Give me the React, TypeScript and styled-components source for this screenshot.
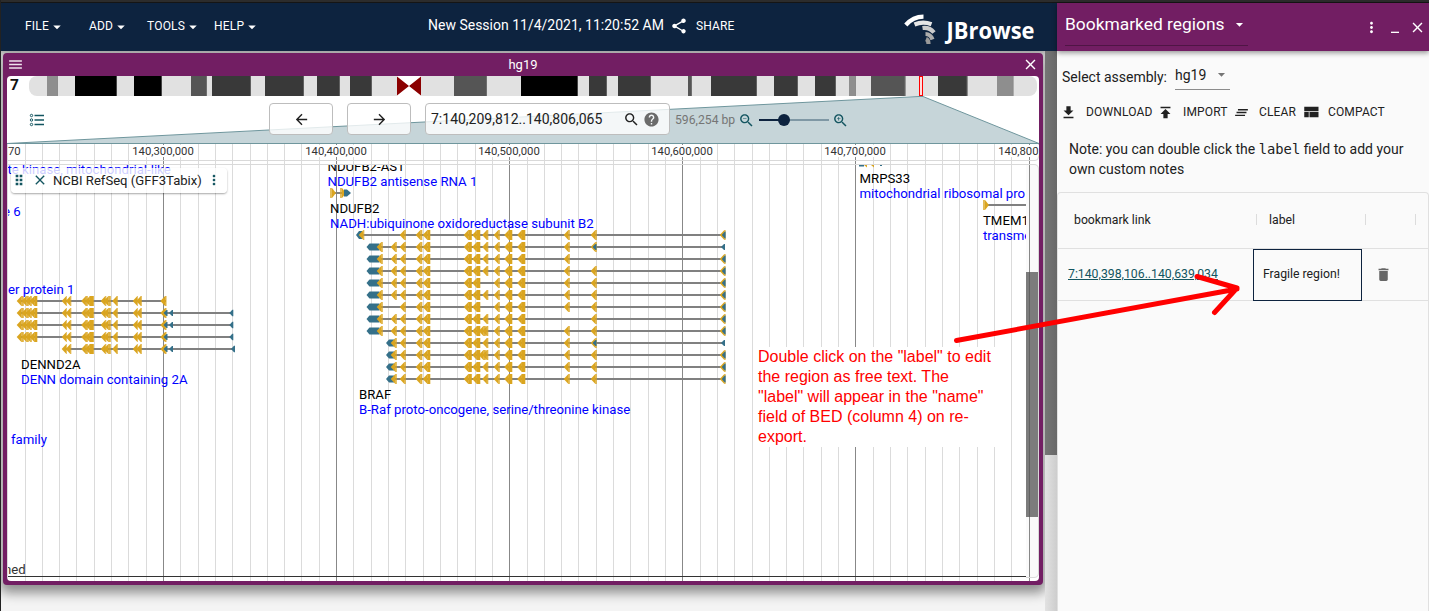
import React from 'react';
import styled, { createGlobalStyle } from 'styled-components';

const NAVY = '#0d233f';
const PURPLE = '#721e63';
const TEAL = '#135560';
const GOLD = '#daa520';
const UTR = '#357089';

const GlobalStyle = createGlobalStyle`
  * { box-sizing: border-box; }
  body { margin: 0; font-family: Roboto, 'Liberation Sans', sans-serif; color: #212121; }
`;

/* ---------- icons ---------- */
const paths = {
  drop: 'M7 10l5 5 5-5z',
  menu: 'M3 18h18v-2H3v2zm0-5h18v-2H3v2zm0-7v2h18V6H3z',
  close:
    'M19 6.41 17.59 5 12 10.59 6.41 5 5 6.41 10.59 12 5 17.59 6.41 19 12 13.41 17.59 19 19 17.59 13.41 12z',
  share:
    'M18 16.08c-.76 0-1.44.3-1.96.77L8.91 12.7c.05-.23.09-.46.09-.7s-.04-.47-.09-.7l7.05-4.11c.54.5 1.25.81 2.04.81 1.66 0 3-1.34 3-3s-1.34-3-3-3-3 1.34-3 3c0 .24.04.47.09.7L8.04 9.81C7.5 9.31 6.79 9 6 9c-1.66 0-3 1.34-3 3s1.34 3 3 3c.79 0 1.5-.31 2.04-.81l7.12 4.16c-.05.21-.08.43-.08.65 0 1.61 1.31 2.92 2.92 2.92 1.61 0 2.92-1.31 2.92-2.92s-1.31-2.92-2.92-2.92z',
  back: 'M20 11H7.83l5.59-5.59L12 4l-8 8 8 8 1.41-1.41L7.83 13H20v-2z',
  forward: 'M12 4l-1.41 1.41L16.17 11H4v2h12.17l-5.58 5.59L12 20l8-8z',
  search:
    'M15.5 14h-.79l-.28-.27C15.41 12.59 16 11.11 16 9.5 16 5.91 13.09 3 9.5 3S3 5.91 3 9.5 5.91 16 9.5 16c1.61 0 3.09-.59 4.23-1.57l.27.28v.79l5 4.99L20.49 19l-4.99-5zm-6 0C7.01 14 5 11.99 5 9.5S7.01 5 9.5 5 14 7.01 14 9.5 11.99 14 9.5 14z',
  help: 'M12 2C6.48 2 2 6.48 2 12s4.48 10 10 10 10-4.48 10-10S17.52 2 12 2zm1 17h-2v-2h2v2zm2.07-7.75l-.9.92C13.45 12.9 13 13.5 13 15h-2v-.5c0-1.1.45-2.1 1.17-2.83l1.24-1.26c.37-.36.59-.86.59-1.41 0-1.1-.9-2-2-2s-2 .9-2 2H8c0-2.21 1.79-4 4-4s4 1.79 4 4c0 .88-.36 1.68-.93 2.25z',
  more: 'M12 8c1.1 0 2-.9 2-2s-.9-2-2-2-2 .9-2 2 .9 2 2 2zm0 2c-1.1 0-2 .9-2 2s.9 2 2 2 2-.9 2-2-.9-2-2-2zm0 6c-1.1 0-2 .9-2 2s.9 2 2 2 2-.9 2-2-.9-2-2-2z',
  minimize: 'M6 19h12v2H6z',
  download: 'M19 9h-4V3H9v6H5l7 7 7-7zM5 18v2h14v-2H5z',
  publish: 'M5 4v2h14V4H5zm0 10h4v6h6v-6h4l-7-7-7 7z',
  clearAll: 'M5 13h14v-2H5v2zm-2 4h14v-2H3v2zM7 7v2h14V7H7z',
  compact: 'M3 19h6v-7H3v7zm7 0h12v-7H10v7zM3 5v6h19V5H3z',
  trash: 'M6 19c0 1.1.9 2 2 2h8c1.1 0 2-.9 2-2V7H6v12zM19 4h-3.5l-1-1h-5l-1 1H5v2h14V4z',
  drag: 'M7 4h4v4H7zM13 4h4v4h-4zM7 10h4v4H7zM13 10h4v4h-4zM7 16h4v4H7zM13 16h4v4h-4z',
};
const ZOOM_OUT = paths.search + 'M7 9h5v1H7z';
const ZOOM_IN = paths.search + 'M12 10h-2v2H9v-2H7V9h2V7h1v2h2v1z';

const IconSvg = styled.svg<{ $size: number; $color?: string }>`
  width: ${p => p.$size}px;
  height: ${p => p.$size}px;
  flex: none;
  display: block;
  fill: ${p => p.$color ?? 'currentColor'};
`;
const Icon = ({ d, size, color }: { d: string; size: number; color?: string }) => (
  <IconSvg $size={size} $color={color} viewBox="0 0 24 24">
    <path d={d} />
  </IconSvg>
);

/* ---------- page frame ---------- */
const Page = styled.div`
  position: relative;
  height: 611px;
  width: 1429px;
  overflow: hidden;
  display: flex;
  flex-direction: column;
  background: #f4f4f4;
  border-left: 1px solid #222;
`;
const TopStrip = styled.div`
  height: 3px;
  flex: none;
  background: #2c2c2c;
  border-bottom: 1px solid #151515;
`;
const Columns = styled.div`
  display: flex;
  flex: 1;
  min-height: 0;
`;
const Main = styled.div`
  width: 1056px;
  display: flex;
  flex-direction: column;
  flex: none;
`;

/* ---------- nav bar ---------- */
const Nav = styled.nav`
  height: 48px;
  flex: none;
  display: flex;
  align-items: center;
  background: ${NAVY};
  color: #fff;
  padding: 0 22px 2px 24px;
  white-space: nowrap;
`;
const MenuButton = styled.div<{ $w: number }>`
  width: ${p => p.$w}px;
  display: flex;
  align-items: center;
  font-size: 12px;
  letter-spacing: 0.2px;
  svg { margin-top: 1px; margin-left: -1px; }
`;
const SessionName = styled.div`
  width: 242px;
  font-size: 14px;
  margin-top: -2px;
`;
const ShareButton = styled.div`
  display: flex;
  align-items: center;
  gap: 8px;
  font-size: 12px;
  letter-spacing: 0.1px;
`;
const Logo = styled.svg`
  width: 132px;
  height: 36px;
  margin-left: auto;
  margin-top: 3px;
`;

/* ---------- workspace ---------- */
const Workspace = styled.div`
  flex: 1;
  display: flex;
  min-height: 0;
`;
const ViewArea = styled.div`
  width: 1044px;
  padding: 2px 2px 0 2px;
  overflow: hidden;
  background: linear-gradient(#b9b9b9 0, #dcdcdc 4px, #f4f4f4 12px);
`;
const PageScroll = styled.div`
  width: 12px;
  background: linear-gradient(90deg, #e2e2e2, #cdcdcd);
`;
const PageThumb = styled.div`
  height: 404px;
  background: linear-gradient(90deg, #757575, #686868);
`;
const ViewWindow = styled.section`
  width: 1040px;
  height: 532px;
  border-radius: 4px;
  background: ${PURPLE};
  padding: 0 4px 4px;
  box-shadow: 0 5px 12px 3px rgba(0, 0, 0, 0.42);
`;
const ViewHeader = styled.header`
  height: 23px;
  display: flex;
  align-items: center;
  justify-content: space-between;
  color: #fff;
  font-size: 13px;
  padding: 0 0 1px;
`;
const ViewBody = styled.div`
  height: 505px;
  border-radius: 4px;
  overflow: hidden;
  background: #fff;
  display: flex;
  flex-direction: column;
`;
const Overview = styled.div`
  height: 20px;
  flex: none;
  display: flex;
`;
const RefName = styled.div`
  width: 22px;
  padding-left: 3px;
  font-size: 15.5px;
  font-weight: 700;
  line-height: 19px;
  color: #111;
`;
const Ideogram = styled.svg`
  display: block;
  width: 1010px;
  height: 20px;
`;
const Controls = styled.div`
  height: 48px;
  flex: none;
  position: relative;
  display: flex;
  align-items: flex-start;
  padding: 7px 0 0 22px;
`;
const Wedge = styled.svg`
  position: absolute;
  inset: 0;
  width: 1032px;
  height: 48px;
`;
const TrackSelect = styled.svg`
  position: relative;
  width: 16px;
  height: 16px;
  margin: 9px 224px 0 0;
`;
const PanButton = styled.button`
  position: relative;
  width: 64px;
  height: 32px;
  margin-right: 14px;
  border: 1px solid #bdbdbd;
  border-radius: 4px;
  background: rgba(255, 255, 255, 0.8);
  display: flex;
  align-items: center;
  justify-content: center;
  padding: 0;
  color: #212121;
`;
const LocationBox = styled.div`
  position: relative;
  width: 245px;
  height: 32px;
  border: 1px solid #bdbdbd;
  border-radius: 4px;
  background: rgba(255, 255, 255, 0.8);
  display: flex;
  align-items: center;
  padding: 0 9px 0 5px;
  font-size: 14px;
`;
const LocationText = styled.span`
  flex: 1;
`;
const HelpWrap = styled.span`
  margin-left: 3px;
`;
const RegionWidth = styled.span`
  position: relative;
  font-size: 12.2px;
  color: #757575;
  margin: 9px 3px 0 5px;
  line-height: 16px;
  width: 60px;
  white-space: nowrap;
`;
const ZoomWrap = styled.span`
  position: relative;
  margin-top: 9px;
`;
const Slider = styled.div`
  position: relative;
  width: 70px;
  height: 2px;
  margin: 16px 3px 0 4px;
  background: linear-gradient(90deg, ${NAVY} 35%, #7f98a5 35%);
`;
const Knob = styled.div`
  position: absolute;
  left: 19px;
  top: -5px;
  width: 12px;
  height: 12px;
  border-radius: 50%;
  background: ${NAVY};
`;
const Tracks = styled.div`
  position: relative;
  flex: 1;
`;
const TrackSvg = styled.svg`
  display: block;
  width: 1032px;
  height: 437px;
  font-family: Roboto, sans-serif;
  font-size: 13.2px;
`;
const TrackLabel = styled.div`
  position: absolute;
  left: 4px;
  top: 24px;
  width: 216px;
  height: 25px;
  border-radius: 4px;
  background: rgba(255, 255, 255, 0.8);
  box-shadow: 0 1px 2px rgba(0, 0, 0, 0.35);
  display: flex;
  align-items: center;
  padding: 0 0 1px;
  font-size: 13.1px;
  color: ${TEAL};
  white-space: nowrap;
`;
const TrackName = styled.span`
  color: #212121;
  width: 153px;
  margin-left: 5px;
`;
const CloseWrap = styled.span`
  margin-left: 5px;
`;

/* ---------- drawer ---------- */
const Drawer = styled.aside`
  position: relative;
  flex: 1;
  display: flex;
  flex-direction: column;
  background: #fafafa;
`;
const DrawerHeader = styled.header`
  height: 48px;
  flex: none;
  display: flex;
  background: ${PURPLE};
  color: #fff;
  padding: 0 3px 0 8px;
  box-shadow: 0 2px 5px rgba(0, 0, 0, 0.4);
`;
const WidgetSelect = styled.div`
  width: 183px;
  height: 43px;
  border-bottom: 1px solid #4f1545;
  display: flex;
  align-items: center;
  justify-content: space-between;
  font-size: 17.4px;
  white-space: nowrap;
`;
const HeaderIcons = styled.div`
  margin-left: auto;
  display: flex;
  align-items: center;
  gap: 6.5px;
`;
const AssemblyRow = styled.div`
  display: flex;
  align-items: center;
  padding: 10px 0 0 5px;
  height: 39px;
  font-size: 14px;
  white-space: nowrap;
`;
const AssemblyLabel = styled.span`
  width: 113px;
  margin-top: 2px;
`;
const AssemblySelect = styled.div`
  width: 55px;
  height: 29px;
  border-bottom: 1px solid #8c8c8c;
  display: flex;
  align-items: center;
  justify-content: space-between;
  padding-bottom: 1px;
`;
const Actions = styled.div`
  display: flex;
  align-items: center;
  height: 20px;
  margin-top: 12px;
  padding-left: 3px;
`;
const Action = styled.div<{ $w: number; $gap: number }>`
  width: ${p => p.$w}px;
  display: flex;
  align-items: center;
  gap: ${p => p.$gap}px;
  font-size: 12px;
  letter-spacing: 0.15px;
  white-space: nowrap;
`;
const Note = styled.p`
  margin: 17px 0 0;
  padding-left: 12px;
  font-size: 14px;
  line-height: 20px;
  white-space: nowrap;
  code { font-family: 'DejaVu Sans Mono', monospace; font-size: 13.8px; line-height: 1; }
`;
const Table = styled.div`
  flex: 1;
  margin: 13px 0 0;
  border: 1px solid #e0e0e0;
  border-bottom: 0;
  border-radius: 4px 4px 0 0;
  font-size: 12.25px;
`;
const TableRow = styled.div<{ $h: number }>`
  height: ${p => p.$h}px;
  display: grid;
  grid-template-columns: 195px 109px 1fr;
  align-items: center;
  border-bottom: 1px solid #e0e0e0;
`;
const HeadCell = styled.div<{ $pad: number }>`
  padding: 0 0 2px ${p => p.$pad}px;
  display: flex;
  align-items: center;
  justify-content: space-between;
`;
const Divider = styled.i<{ $right: number }>`
  width: 1px;
  height: 11px;
  margin-right: ${p => p.$right}px;
  background: #dcdcdc;
`;
const LinkCell = styled.a`
  padding: 0 0 2px 10px;
  color: ${TEAL};
  text-decoration: underline;
`;
const LabelCell = styled.div`
  height: 52px;
  margin-bottom: -1px;
  border: 1px solid ${NAVY};
  display: flex;
  align-items: center;
  padding: 0 0 2px 9px;
`;
const DeleteCell = styled.div`
  padding-left: 13px;
  color: #666;
`;

/* ---------- annotation over the page ---------- */
const Callout = styled.div`
  position: absolute;
  left: 756px;
  top: 347px;
  width: 238px;
  height: 100px;
  padding-left: 1px;
  background: #fff;
  color: #f00;
  font-family: 'Liberation Sans', Arial, sans-serif;
  font-size: 16px;
  line-height: 20px;
  white-space: nowrap;
`;
const ArrowLayer = styled.svg`
  position: absolute;
  left: -1px;
  top: 0;
  width: 1429px;
  height: 611px;
  pointer-events: none;
`;

/* ---------- data ---------- */
const bands: [number, number, string][] = [
  [47, 58, '#8e8e8e'], [75, 117, '#000'], [134, 162, '#000'], [191, 207, '#555'],
  [212, 251, '#393939'], [265, 304, '#393939'], [317, 340, '#393939'], [350, 372, '#393939'],
  [454, 487, '#555'], [521, 578, '#000'], [589, 607, '#393939'], [618, 651, '#393939'],
  [688, 692, '#555'], [711, 757, '#393939'], [774, 798, '#393939'], [815, 836, '#393939'],
  [849, 856, '#8e8e8e'], [871, 905.5, '#555'], [938, 967.5, '#393939'], [997, 1013.5, '#8e8e8e'],
];

const gridLines = Array.from({ length: 60 }, (_, i) => i - 9)
  .map(k => ({ x: Math.floor(163.5 + 17.31 * k), major: k % 10 === 0 }))
  .filter(g => g.x >= 7 && g.x < 1039);

const scaleLabels: [number, string][] = [
  [163, '140,300,000'], [336, '140,400,000'], [509, '140,500,000'],
  [682, '140,600,000'], [855, '140,700,000'], [1029, '140,800,000'],
];

type Exon = [number, number];
const core: Exon[] = [
  [416, 422.5], [423, 430.5], [464, 472], [472.5, 480.5], [482.5, 488.5],
  [494, 500], [504.5, 512.5], [517.5, 525.5], [564, 570], [591, 597],
];
const brafRows = Array.from({ length: 13 }, (_, i) => {
  let exons: Exon[] = [[400, 406], ...core];
  if (i !== 0 && i !== 6) exons.unshift([391, 397]);
  if (i > 0 && i < 9) exons.unshift([377, 383]);
  if (i === 2) exons = exons.filter(e => e[0] !== 591);
  if (i === 4 || i === 6) exons = exons.filter(e => e[0] !== 482.5);
  if (i === 7) exons = exons.filter(e => e[0] !== 564);
  if (i === 8 || i === 10) exons.push([479, 486]);
  return { y: 235 + 12 * i, exons, start: i === 0 ? 356 : i < 9 ? 366.5 : 386, coding: i !== 1 && i !== 9, i };
});

const LeftExon = ({ e: [a, b], y }: { e: Exon; y: number }) => (
  <g fill={GOLD}>
    <path d={`M${a - 0.3} ${y}L${a + 4.4} ${y - 5}V${y + 5}Z`} />
    <rect x={a + 4.2} y={y - 5} width={b - a - 4.4} height={10} opacity={b - a > 7 ? 1 : 0.85} />
  </g>
);
const RightExon = ({ x, y }: { x: number; y: number }) => (
  <g fill={GOLD}>
    <rect x={x} y={y - 5} width={2} height={10} opacity={0.75} />
    <path d={`M${x + 2} ${y - 5}L${x + 6} ${y}L${x + 2} ${y + 5}Z`} />
  </g>
);
const UtrTip = ({ x, w = 4, y, h = 3 }: { x: number; w?: number; y: number; h?: number }) => (
  <path fill={UTR} d={`M${x} ${y}L${x + 3} ${y - h}H${x + w}V${y + h}H${x + 3}Z`} />
);
const Intron = ({ a, b, y }: { a: number; b: number; y: number }) => (
  <rect x={a} y={y - 1} width={b - a} height={2} fill="#808080" />
);

const dennExons: Exon[] = [
  [17, 24], [22, 29], [26, 32], [30, 37.5], [62, 67], [66, 71.5], [81.5, 88], [85.5, 94],
  [101, 106.5], [104, 111], [112.5, 118], [133, 138], [136.5, 142], [160.7, 166.7],
];

const Genes = () => (
  <>
    {brafRows.map(r => (
      <g key={r.y}>
        <Intron a={r.start + 3} b={724} y={r.y} />
        {r.i === 0 ? (
          <>
            <UtrTip x={356} w={6} y={r.y} h={4} />
            <LeftExon e={[359, 364.5]} y={r.y} />
          </>
        ) : (
          <UtrTip x={r.start} w={r.i < 9 ? 13 : 8} y={r.y} h={3.5} />
        )}
        {r.exons.map(e => <LeftExon key={e[0]} e={e} y={r.y} />)}
        {!r.coding && <UtrTip x={592.5} y={r.y} />}
        {r.coding && <LeftExon e={[720, 725.8]} y={r.y} />}
        {r.coding ? <UtrTip x={721.8} w={3.8} y={r.y} h={3.5} /> : <UtrTip x={721} y={r.y} />}
      </g>
    ))}
    {[0, 1, 2, 3, 4].map(i => {
      const y = 301 + 12 * i;
      return (
        <g key={y}>
          <Intron a={i === 4 ? 66 : 21} b={i === 0 ? 166 : 233} y={y} />
          {dennExons.filter(e => i < 4 || e[0] > 60).map(e => <LeftExon key={e[0]} e={e} y={y} />)}
          {i > 0 && <UtrTip x={163.5} y={y} />}
          {i > 0 && i !== 3 && <UtrTip x={169} y={y} />}
          {i > 0 && <UtrTip x={i === 4 ? 231 : 229.3} y={y} h={3.2} />}
        </g>
      );
    })}
    <Intron a={332} b={348} y={193} />
    <RightExon x={330} y={193} />
    <RightExon x={340} y={193} />
    <path d="M344 189.500h3l4 3.500l-4 3.500h-3z" fill={UTR} />
    <Intron a={986} b={1026} y={205} />
    <RightExon x={983} y={205} />
    <path d="M859 165h5v1.500h-5zM880 165h2v1h-2z" fill={UTR} />
    <path d="M864 165h3v2.500zM871 165h3v2.500z" fill={GOLD} />
  </>
);

const geneText: [number, number, string, string][] = [
  [7.5, 174, 'te kinase, mitochondrial-like', 'blue'],
  [3, 216, 'e 6', 'blue'],
  [8, 294, 'er protein 1', 'blue'],
  [21, 369, 'DENND2A', 'black'],
  [21, 384, 'DENN domain containing 2A', 'blue'],
  [11, 444, 'family', 'blue'],
  [327.5, 171, 'NDUFB2-AS1', 'black'],
  [327.5, 186, 'NDUFB2 antisense RNA 1', 'blue'],
  [330, 213, 'NDUFB2', 'black'],
  [330, 228, 'NADH:ubiquinone oxidoreductase subunit B2', 'blue'],
  [359, 399, 'BRAF', 'black'],
  [359, 414, 'B-Raf proto-oncogene, serine/threonine kinase', 'blue'],
  [859.5, 183, 'MRPS33', 'black'],
  [859.5, 198, 'mitochondrial ribosomal pro', 'blue'],
  [983, 225, 'TMEM178B', 'black'],
  [983, 240, 'transmembrane protein 178B', 'blue'],
  [4, 574, 'ned', '#333'],
];

export default function App() {
  return (
    <>
      <GlobalStyle />
      <Page>
        <TopStrip />
        <Columns>
          <Main>
            <Nav>
              {([['FILE', 64], ['ADD', 58], ['TOOLS', 67], ['HELP', 214]] as [string, number][]).map(([t, w]) => (
                <MenuButton key={t} $w={w}>
                  {t}
                  <Icon d={paths.drop} size={18} />
                </MenuButton>
              ))}
              <SessionName>New Session 11/4/2021, 11:20:52 AM</SessionName>
              <ShareButton>
                <Icon d={paths.share} size={18} />
                SHARE
              </ShareButton>
              <Logo viewBox="903 9 132 36">
                <g fill="none" strokeWidth="4.2">
                  <path d="M905.800 24Q913 15.800 923.500 15.700" stroke="#fff" />
                  <path d="M914.500 23.500Q923 20 931.500 23.300" stroke="#e6e6e6" />
                  <path d="M922.500 27Q929.500 26 934 31.500" stroke="#ccc" />
                  <path d="M925.500 33Q930.500 33 932.500 38.500" stroke="#adadad" />
                  <path d="M926 38Q928.500 39 928.500 43" stroke="#999" />
                </g>
                <text x="946.500" y="37.500" fill="#fff" fontFamily="'Open Sans', sans-serif" fontWeight="700" fontSize="22.500" textLength="88" lengthAdjust="spacingAndGlyphs">
                  JBrowse
                </text>
              </Logo>
            </Nav>
            <Workspace>
              <ViewArea>
                <ViewWindow>
                  <ViewHeader>
                    <Icon d={paths.menu} size={17} color="#efe4ed" />
                    <span>hg19</span>
                    <Icon d={paths.close} size={17} />
                  </ViewHeader>
                  <ViewBody>
                    <Overview>
                      <RefName>7</RefName>
                      <Ideogram viewBox="29 76 1010 20">
                        <defs>
                          <clipPath id="chr">
                            <rect x="29" y="76" width="369" height="20" rx="8" />
                            <rect x="60" y="76" width="900" height="20" />
                            <rect x="500" y="76" width="537" height="20" rx="8" />
                          </clipPath>
                        </defs>
                        <g clipPath="url(#chr)">
                          <rect x="29" y="76" width="1010" height="20" fill="#e1e1e1" />
                          {bands.map(([a, b, c]) => (
                            <g key={a}>
                              <rect x={a} y="76" width={b - a} height="20" fill={c} />
                              <rect x={b - 1} y="76" width="1" height="20" fill="#888" opacity="0.5" />
                            </g>
                          ))}
                          <rect x="397" y="76" width="24" height="20" fill="#fff" />
                          <path d="M397 76.500L409 86L397 95.500ZM421 76.500L409 86L421 95.500Z" fill="#8b0000" />
                        </g>
                        <rect x="919.500" y="76.500" width="3" height="19" fill="#fdd" stroke="red" />
                      </Ideogram>
                    </Overview>
                    <Controls>
                      <Wedge viewBox="7 96 1032 48">
                        <path d="M7 143.500L919 96.500H923L1039 143.500Z" fill="#c6d5d9" stroke="#6f969d" />
                      </Wedge>
                      <TrackSelect viewBox="0 0 16 16" fill="none" stroke={TEAL}>
                        <path d="M5.500 3.500H15M5.500 8H15M5.500 12.500H15" strokeWidth="1.4" />
                        <circle cx="2.500" cy="3.500" r="1.200" />
                        <circle cx="2.500" cy="8" r="1.200" />
                        <circle cx="2.500" cy="12.500" r="1.200" />
                      </TrackSelect>
                      <PanButton><Icon d={paths.back} size={17} /></PanButton>
                      <PanButton><Icon d={paths.forward} size={17} /></PanButton>
                      <LocationBox>
                        <LocationText>7:140,209,812..140,806,065</LocationText>
                        <Icon d={paths.search} size={17} />
                        <HelpWrap><Icon d={paths.help} size={17} color="#6b6b6b" /></HelpWrap>
                      </LocationBox>
                      <RegionWidth>596,254 bp</RegionWidth>
                      <ZoomWrap><Icon d={ZOOM_OUT} size={17} color={TEAL} /></ZoomWrap>
                      <Slider><Knob /></Slider>
                      <ZoomWrap><Icon d={ZOOM_IN} size={17} color={TEAL} /></ZoomWrap>
                    </Controls>
                    <Tracks>
                      <TrackSvg viewBox="7 144 1032 437">
                        <defs>
                          <clipPath id="track">
                            <rect x="8" y="165" width="1018" height="412" />
                          </clipPath>
                        </defs>
                        <rect x="1026" y="165" width="12" height="412" fill="#fafafa" />
                        <rect x="1026" y="272" width="12" height="245" fill="#7c7c7c" />
                        {gridLines.map(g => (
                          <rect key={g.x} x={g.x} y="144" width="1" height="437" fill={g.major ? '#555' : '#888'} opacity={g.major ? 0.7 : 0.3} />
                        ))}
                        <path d="M7 160.500H1035Q1038.500 160.500 1038.500 157V144M7 164.500H1034Q1038.500 164.500 1038.500 169V573Q1038.500 577.500 1034 577.500H1026" fill="none" stroke="#d9d9d9" />
                        {scaleLabels.map(([x, t]) => (
                          <g key={t}>
                            <rect x={x - 31} y="145" width="63" height="12" fill="#fff" />
                            <text x={x} y="155" textAnchor="middle" fontSize="11.300" fill="#333">{t}</text>
                          </g>
                        ))}
                        <text x="8" y="155" fontSize="11.300" fill="#333">70</text>
                        <g clipPath="url(#track)">
                          <Genes />
                          {geneText.map(([x, y, t, c]) => (
                            <text key={t} x={x} y={y} fill={c}>{t}</text>
                          ))}
                          <rect x="7" y="576" width="1019" height="1" fill="#333" />
                        </g>
                      </TrackSvg>
                      <TrackLabel>
                        <Icon d={paths.drag} size={16} />
                        <CloseWrap><Icon d={paths.close} size={16} /></CloseWrap>
                        <TrackName>NCBI RefSeq (GFF3Tabix)</TrackName>
                        <Icon d={paths.more} size={16} />
                      </TrackLabel>
                    </Tracks>
                  </ViewBody>
                </ViewWindow>
              </ViewArea>
              <PageScroll><PageThumb /></PageScroll>
            </Workspace>
          </Main>
          <Drawer>
            <DrawerHeader>
              <WidgetSelect>
                Bookmarked regions
                <Icon d={paths.drop} size={17} />
              </WidgetSelect>
              <HeaderIcons>
                <Icon d={paths.more} size={17} />
                <Icon d={paths.minimize} size={16} />
                <Icon d={paths.close} size={17} />
              </HeaderIcons>
            </DrawerHeader>
            <AssemblyRow>
              <AssemblyLabel>Select assembly:</AssemblyLabel>
              <AssemblySelect>
                hg19
                <Icon d={paths.drop} size={17} color="#757575" />
              </AssemblySelect>
            </AssemblyRow>
            <Actions>
              <Action $w={97} $gap={9}><Icon d={paths.download} size={17} />DOWNLOAD</Action>
              <Action $w={76} $gap={9}><Icon d={paths.publish} size={17} />IMPORT</Action>
              <Action $w={69} $gap={9}><Icon d={paths.clearAll} size={17} />CLEAR</Action>
              <Action $w={90} $gap={8}><Icon d={paths.compact} size={18} />COMPACT</Action>
            </Actions>
            <Note>
              Note: you can double click the <code>label</code> field to add your
              <br />
              own custom notes
            </Note>
            <Table>
              <TableRow $h={56}>
                <HeadCell $pad={16}>bookmark link<Divider $right={-4} /></HeadCell>
                <HeadCell $pad={16}>label<Divider $right={-4} /></HeadCell>
                <HeadCell $pad={12}><span /><Divider $right={12} /></HeadCell>
              </TableRow>
              <TableRow $h={52}>
                <LinkCell>7:140,398,106..140,639,034</LinkCell>
                <LabelCell>Fragile region!</LabelCell>
                <DeleteCell><Icon d={paths.trash} size={17} /></DeleteCell>
              </TableRow>
            </Table>
          </Drawer>
        </Columns>
        <Callout>
          Double click on the "label" to edit<br />
          the region as free text. The<br />
          "label" will appear in the "name"<br />
          field of BED (column 4) on re-<br />
          export.
        </Callout>
        <ArrowLayer viewBox="0 0 1429 611" fill="none" stroke="red" strokeWidth="5" strokeLinecap="round" strokeLinejoin="round">
          <path d="M956.500 340.500L1237 289M1197 276.500L1237 288L1214.500 312.500" />
        </ArrowLayer>
      </Page>
    </>
  );
}
